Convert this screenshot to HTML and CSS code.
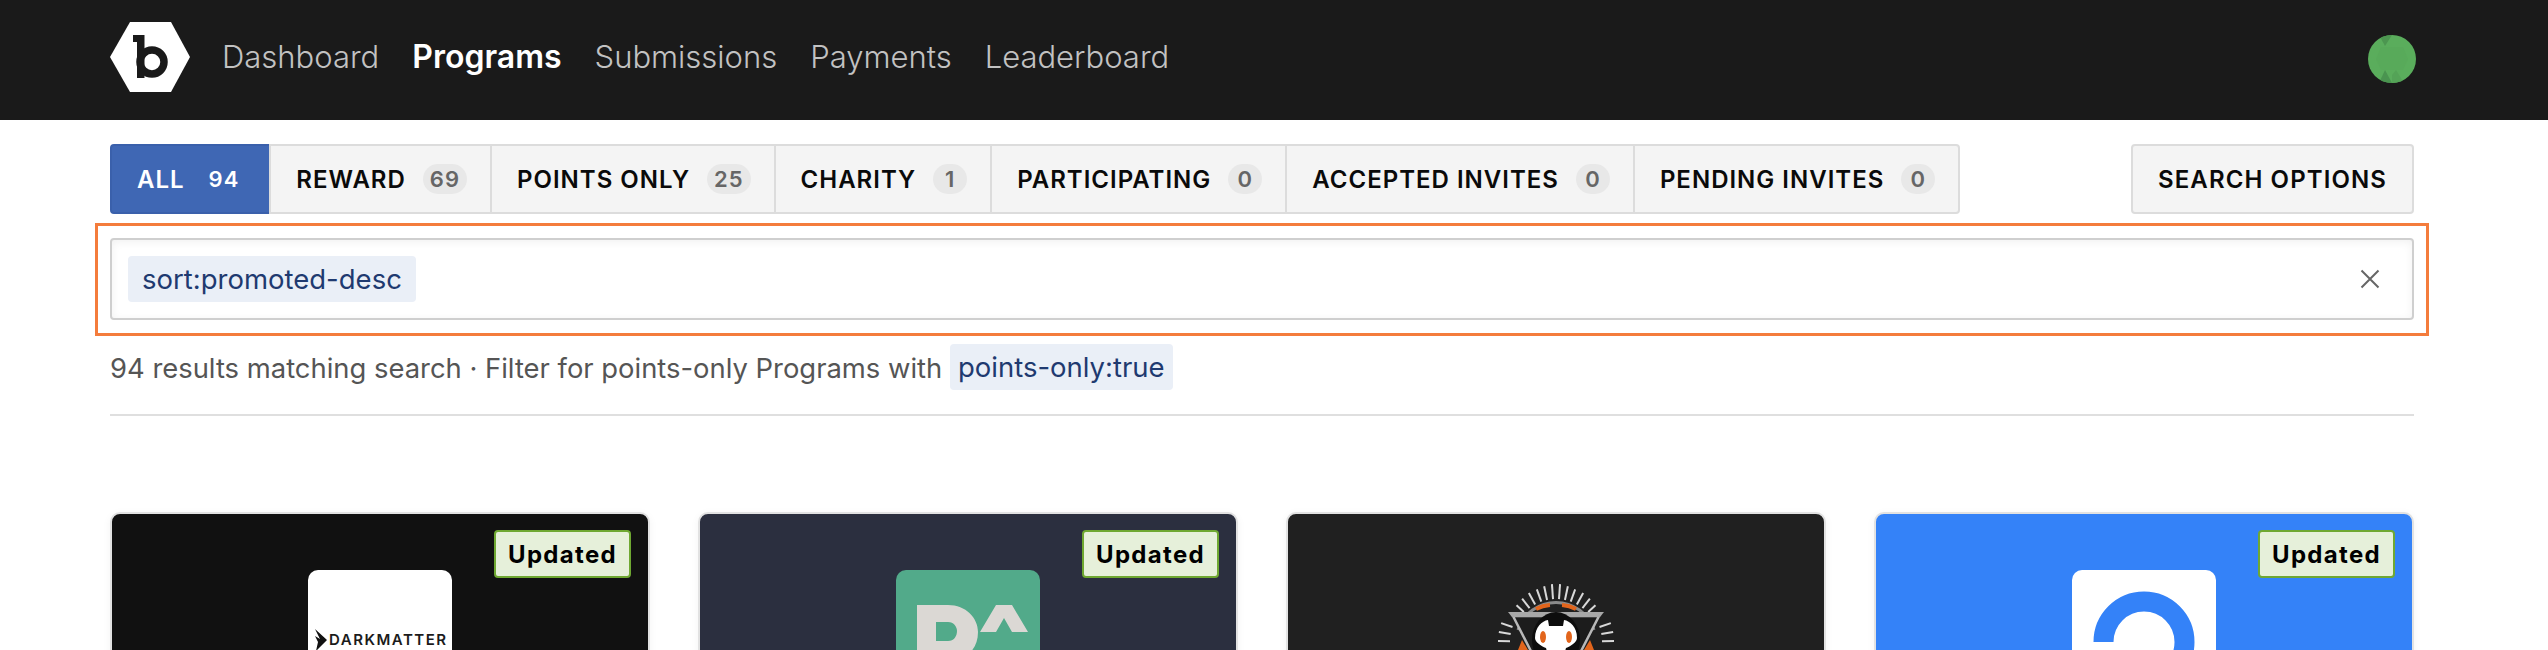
FILE: index.html
```html
<!DOCTYPE html>
<html lang="en">
<head>
<meta charset="utf-8">
<title>Programs</title>
<link rel="stylesheet" href="styles.css">
</head>
<body>
<header class="topbar">
  <div class="topbar-left">
    <svg class="brand" width="80" height="70" viewBox="0 0 80 70" aria-label="Bugcrowd">
      <polygon points="0,35 20,0 61,0 80,35 61,70 20,70" fill="#fff"/>
      <circle cx="42" cy="40" r="12" fill="none" stroke="#1a1a1a" stroke-width="7.500"/>
      <path d="M23 13H34.500V56H27V20H23Z" fill="#1a1a1a"/>
    </svg>
    <nav class="nav">
      <a class="nav-link">Dashboard</a>
      <a class="nav-link nav-active">Programs</a>
      <a class="nav-link">Submissions</a>
      <a class="nav-link">Payments</a>
      <a class="nav-link">Leaderboard</a>
    </nav>
  </div>
  <svg class="avatar" width="48" height="48" viewBox="0 0 48 48">
    <defs><clipPath id="avatar-clip"><circle cx="24" cy="24" r="24"/></clipPath></defs>
    <g clip-path="url(#avatar-clip)">
      <rect width="48" height="48" fill="#5aad5c"/>
      <polygon points="11,0 24,0 17,11" fill="#4c9650"/>
      <polygon points="11,48 24,48 17,35" fill="#4a9450"/>
      <polygon points="24,48 36,48 28,35 24,40" fill="#54a357"/>
      <polygon points="13,12 35,12 40,24 35,35 13,35 8,24" fill="#58aa5a"/>
    </g>
  </svg>
</header>

<main class="page">
  <div class="toolbar">
    <div class="tabs">
      <a class="tab tab-active">ALL <span class="count">94</span></a>
      <a class="tab">REWARD <span class="count">69</span></a>
      <a class="tab">POINTS ONLY <span class="count">25</span></a>
      <a class="tab">CHARITY <span class="count">1</span></a>
      <a class="tab">PARTICIPATING <span class="count">0</span></a>
      <a class="tab">ACCEPTED INVITES <span class="count">0</span></a>
      <a class="tab">PENDING INVITES <span class="count">0</span></a>
    </div>
    <button class="options">SEARCH OPTIONS</button>
  </div>

  <div class="search">
    <span class="chip">sort:promoted-desc</span>
    <svg class="clear" width="20" height="20" viewBox="0 0 20 20">
      <path d="M1.5 1.5L18.5 18.5M18.5 1.5L1.5 18.5" stroke="#666" stroke-width="2" fill="none"/>
    </svg>
    <div class="highlight"></div>
  </div>

  <p class="results">94 results matching search · Filter for points-only Programs with <span class="chip chip-inline">points-only:true</span></p>
  <hr class="rule">

  <section class="cards">
    <article class="card card-dark">
      <span class="badge">Updated</span>
      <div class="logo logo-darkmatter">
        <div class="dm-row">
          <svg width="13" height="22" viewBox="0 0 13 22"><path d="M0 0L12 11L1 22L3 13L0 7L5 10Z" fill="#111"/></svg>
          <span class="dm-name">DARKMATTER</span>
        </div>
        <div class="dm-sub"></div>
      </div>
    </article>

    <article class="card card-navy">
      <span class="badge">Updated</span>
      <div class="logo logo-green">
        <svg width="144" height="144" viewBox="0 0 144 144">
          <path fill="#dbd8d4" fill-rule="evenodd" d="M21 35H52C70 35 82 48 82 62C82 80 70 90 52 90H40V120H21ZM40 52V71H52C58 71 61 66 61 61C61 57 58 52 52 52Z"/>
          <path fill="#dbd8d4" d="M100 35H116L132 62H116L108 48L100 62H84Z"/>
        </svg>
      </div>
    </article>

    <article class="card card-charcoal">
      <div class="logo">
        <svg width="144" height="144" viewBox="0 0 144 144">
          <g stroke="#d8d8d8" stroke-width="2">
            <line x1="72" y1="29" x2="72" y2="14" transform="rotate(-4 72 72)"/>
            <line x1="72" y1="29" x2="72" y2="14" transform="rotate(4 72 72)"/>
            <line x1="72" y1="29" x2="72" y2="15" transform="rotate(-12 72 72)"/>
            <line x1="72" y1="29" x2="72" y2="15" transform="rotate(12 72 72)"/>
            <line x1="72" y1="29" x2="72" y2="16" transform="rotate(-20 72 72)"/>
            <line x1="72" y1="29" x2="72" y2="16" transform="rotate(20 72 72)"/>
            <line x1="72" y1="29" x2="72" y2="16" transform="rotate(-29 72 72)"/>
            <line x1="72" y1="29" x2="72" y2="16" transform="rotate(29 72 72)"/>
            <line x1="72" y1="29" x2="72" y2="17" transform="rotate(-38 72 72)"/>
            <line x1="72" y1="29" x2="72" y2="17" transform="rotate(38 72 72)"/>
            <line x1="72" y1="28" x2="72" y2="18" transform="rotate(-47 72 72)"/>
            <line x1="72" y1="28" x2="72" y2="18" transform="rotate(47 72 72)"/>
            <line x1="72" y1="26" x2="72" y2="14" transform="rotate(-71 72 72)"/>
            <line x1="72" y1="26" x2="72" y2="14" transform="rotate(71 72 72)"/>
            <line x1="72" y1="26" x2="72" y2="14" transform="rotate(-80 72 72)"/>
            <line x1="72" y1="26" x2="72" y2="14" transform="rotate(80 72 72)"/>
            <line x1="72" y1="26" x2="72" y2="14" transform="rotate(-89 72 72)"/>
            <line x1="72" y1="26" x2="72" y2="14" transform="rotate(89 72 72)"/>
          </g>
          <path d="M34 60A40 40 0 0 1 110 60" fill="none" stroke="#8a8a8a" stroke-width="3"/>
          <path d="M52 39A34 34 0 0 1 66 35M78 35A34 34 0 0 1 92 39" fill="none" stroke="#e2651c" stroke-width="4"/>
          <path d="M29 46L72 130L115 46Z" fill="#1c1c1c" stroke="#b8b8b8" stroke-width="2.500"/>
          <path d="M24 42H120L116 47H28Z" fill="#a8a8a8"/>
          <path d="M38 70L44 80H34ZM106 70L100 80H110Z" fill="#e2651c"/>
          <ellipse cx="72" cy="70" rx="24" ry="28" fill="#0d0d0d"/>
          <path d="M51 68C51 57 58 51 64 50L65 56H79L80 50C86 51 93 57 93 68C93 72 87 76 82 78C80 84 82 90 84 96H60C62 90 64 84 62 78C57 76 51 72 51 68Z" fill="#fff"/>
          <ellipse cx="59" cy="67" rx="3" ry="6" fill="#e2651c"/>
          <ellipse cx="85" cy="67" rx="3" ry="6" fill="#e2651c"/>
        </svg>
      </div>
    </article>

    <article class="card card-blue">
      <span class="badge">Updated</span>
      <div class="logo logo-white">
        <svg width="144" height="144" viewBox="0 0 144 144">
          <path d="M31.500 72A40.500 40.500 0 1 1 72 112.500" fill="none" stroke="#3482f8" stroke-width="20"/>
        </svg>
      </div>
    </article>
  </section>
</main>
</body>
</html>
```

FILE: styles.css
```css
* {
  box-sizing: border-box;
}

html,
body {
  margin: 0;
  height: 100%;
  overflow: hidden;
  background: #fff;
  font-family: Inter, "Liberation Sans", sans-serif;
}

.topbar {
  height: 120px;
  background: #1a1a1a;
  padding: 0 132px 6px 110px;
  display: flex;
  align-items: center;
  justify-content: space-between;
}

.topbar-left {
  display: flex;
  align-items: center;
  gap: 32px;
}

.brand,
.avatar {
  display: block;
}

.avatar {
  margin-top: 4px;
}

.nav {
  display: flex;
  gap: 33px;
}

.nav-link {
  font-size: 31px;
  line-height: 40px;
  font-weight: 300;
  color: #c2c2c2;
}

.nav-active {
  font-size: 32px;
  font-weight: 600;
  color: #fff;
}

.page {
  padding: 24px 134px 0 110px;
}

.toolbar {
  display: flex;
  justify-content: space-between;
}

.tabs {
  display: flex;
}

.tab {
  height: 70px;
  display: flex;
  align-items: center;
  gap: 17px;
  padding: 0 23px 0 25px;
  background: #f4f4f4;
  border: 2px solid #dcdcdc;
  margin-left: -2px;
  font-size: 24px;
  font-weight: 600;
  letter-spacing: 1px;
  color: #0a0a0a;
}

.tab:first-child {
  margin-left: 0;
  border-radius: 4px 0 0 4px;
}

.tab:last-child {
  border-radius: 0 4px 4px 0;
}

.tab-active {
  background: #3f67b4;
  border-color: #3a60ab;
  color: #fff;
}

.count {
  min-width: 34px;
  height: 30px;
  padding: 0 7px;
  border-radius: 15px;
  background: #e8e8e8;
  color: #666;
  font-size: 22px;
  font-weight: 600;
  line-height: 30px;
  text-align: center;
}

.tab-active .count {
  background: transparent;
  color: #fff;
}

.options {
  height: 70px;
  padding: 0 25px;
  background: #f4f4f4;
  border: 2px solid #dcdcdc;
  border-radius: 4px;
  font-family: inherit;
  font-size: 24px;
  font-weight: 600;
  letter-spacing: 1.1px;
  color: #0a0a0a;
}

.search {
  position: relative;
  height: 82px;
  margin-top: 24px;
  padding: 0 16px;
  display: flex;
  align-items: center;
  justify-content: space-between;
  background: #fff;
  border: 2px solid #cfcfcf;
  border-radius: 4px;
  box-shadow: inset 0 2px 8px rgba(0, 0, 0, 0.06);
}

.clear {
  margin-right: 16px;
  flex: none;
}

.highlight {
  position: absolute;
  inset: -17px -17px -18px -17px;
  border: 3px solid #f47c3c;
  pointer-events: none;
}

.chip {
  display: inline-block;
  height: 46px;
  padding: 0 14px;
  background: #eaeff7;
  border-radius: 4px;
  color: #1f3a70;
  font-size: 27.500px;
  line-height: 46px;
}

.results {
  margin: 24px 0 0;
  height: 46px;
  color: #555;
  font-size: 27.400px;
  line-height: 48px;
}

.chip-inline {
  padding: 0 8px;
  vertical-align: top;
}

.rule {
  margin: 24px 0 0;
  border: 0;
  height: 2px;
  background: #dfdfdf;
}

.cards {
  margin-top: 96px;
  display: grid;
  grid-template-columns: repeat(4, 1fr);
  gap: 48px;
}

.card {
  position: relative;
  height: 320px;
  padding-top: 56px;
  display: flex;
  justify-content: center;
  border: 2px solid #e2e2e2;
  border-radius: 10px;
  box-shadow: 0 2px 8px rgba(0, 0, 0, 0.05);
}

.card-dark { background: #111; }
.card-navy { background: #2b2f3f; }
.card-charcoal { background: #202020; }
.card-blue { background: #3482f8; }

.badge {
  position: absolute;
  top: 16px;
  right: 17px;
  width: 137px;
  height: 48px;
  background: #e6f0da;
  border: 2px solid #6fa832;
  border-radius: 4px;
  color: #000;
  font-size: 24px;
  font-weight: 700;
  letter-spacing: 1.3px;
  line-height: 45px;
  text-align: center;
}

.logo {
  width: 144px;
  height: 144px;
  border-radius: 10px;
  overflow: hidden;
}

.logo svg {
  display: block;
}

.logo-green { background: #52aa8a; }
.logo-white { background: #fff; }

.logo-darkmatter {
  background: #fff;
  padding: 59px 0 0 7px;
}

.dm-row {
  display: flex;
  align-items: center;
  gap: 1px;
}

.dm-name {
  font-size: 15px;
  font-weight: 600;
  letter-spacing: 1.500px;
  color: #1b1b1b;
  line-height: 22px;
}

.dm-sub {
  width: 80px;
  height: 1px;
  margin: 0 0 0 14px;
  background: #bbb;
}
```
